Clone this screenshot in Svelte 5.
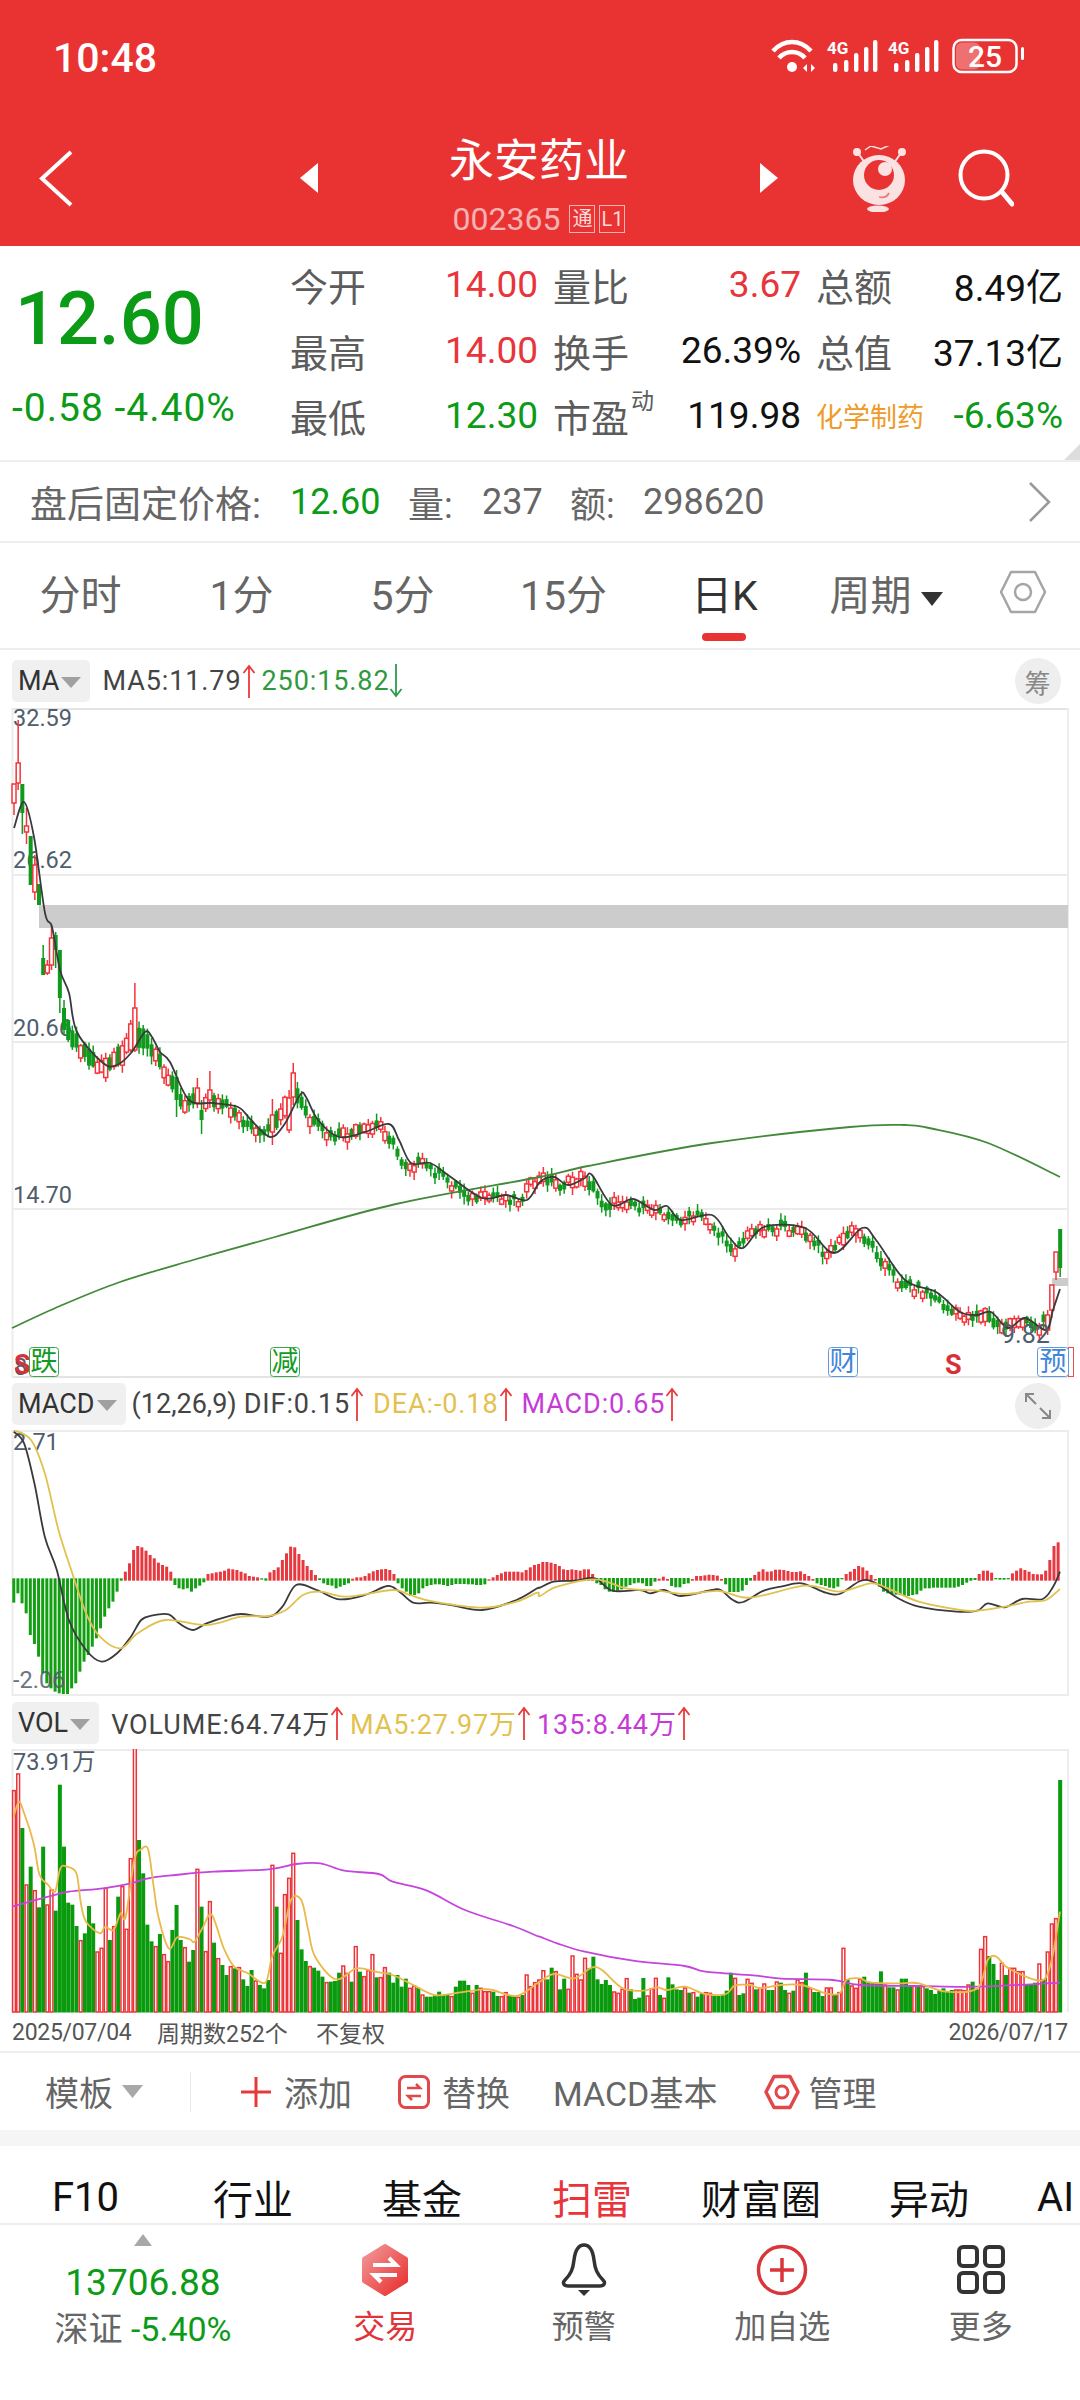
<script lang="ts">
  // vol bar tops as read off the screen, negative = green (down day), baseline 937 in zoom units
  const V = [272,222,-384,555,-500,572,-622,-440,615,570,-632,-254,-440,-608,-614,-678,722,-700,-618,-670,756,745,565,-720,680,-590,560,688,476,145,-420,-520,-674,-724,740,-702,764,785,-690,-615,-720,743,-785,-750,508,-620,755,605,-728,776,-795,-825,800,-805,803,-838,-858,-810,843,-855,-865,-840,496,-620,760,584,535,460,-660,-748,-783,800,-803,-812,-830,848,-845,-843,-818,798,820,-845,740,-815,830,812,764,-832,833,803,-818,-848,-825,-860,-836,865,858,-863,885,-890,-890,-885,-875,-885,-885,890,-860,-842,-842,-855,880,-855,865,875,875,-875,-888,890,878,-888,-888,892,-885,825,860,848,840,
    812,-838,-803,815,-868,-836,868,768,823,840,775,-805,-770,-838,-852,-840,-855,876,880,868,836,-868,-897,-893,-834,888,866,835,-885,895,-832,-853,-868,-870,864,-878,878,-890,-880,878,880,-888,-888,-886,-872,-818,835,-885,-880,838,850,-868,865,852,-870,-870,846,-848,-870,880,-872,840,848,-818,866,-876,-876,-888,864,864,-882,878,745,-838,858,865,838,-830,-845,-848,-848,-814,855,-862,-862,870,-836,-836,-855,858,-855,860,-865,-870,-882,-872,-865,-875,-870,870,870,872,855,-845,-868,748,710,-768,-792,-840,790,-825,805,805,815,815,-855,-855,-848,792,-838,756,672,656,-240];

  const barX = (i: number) => 14 + 4.168 * i;
  const rnd = (i: number) => { const s = Math.sin(i * 12.9898) * 43758.5453; return s - Math.floor(s); };

  const xl = (z: number) => z / 2.904;
  const xr = (z: number) => 540 + z / 2.904;
  const pts = (left: number[][], right: number[][], y0l: number, y0r: number) => [
    ...left.map(([x, y]) => [xl(x), y0l + y / 3]),
    ...right.map(([x, y]) => [xr(x), y0r + y / 3])
  ];

  // catmull-rom through the read points
  function smooth(p: number[][]) {
    let d = `M${p[0][0].toFixed(1)} ${p[0][1].toFixed(1)}`;
    for (let i = 0; i < p.length - 1; i++) {
      const a = p[i - 1] || p[i], b = p[i], c = p[i + 1], e = p[i + 2] || c;
      const c1 = [b[0] + (c[0] - a[0]) / 6, b[1] + (c[1] - a[1]) / 6];
      const c2 = [c[0] - (e[0] - b[0]) / 6, c[1] - (e[1] - b[1]) / 6];
      d += `C${c1[0].toFixed(1)} ${c1[1].toFixed(1)} ${c2[0].toFixed(1)} ${c2[1].toFixed(1)} ${c[0].toFixed(1)} ${c[1].toFixed(1)}`;
    }
    return d;
  }

  const ma5Pts = [[14,828],[24,802],[34,837],[45,913],[52,927],[60,970],[69,993],[77,1032],[103,1063],[117,1065],[131,1053],[145,1032],[152,1037],[160,1052],[170,1062],[189,1100],[213,1103],[238,1107],[251,1120],[270,1137],[284,1125],[300,1095],[306,1097],[318,1120],[339,1137],[365,1132],[389,1124],[399,1140],[411,1163],[430,1163],[448,1175],[482,1198],[506,1195],[527,1200],[540,1182],[554,1177],[568,1185],[585,1178],[592,1175],[612,1205],[633,1199],[654,1210],[667,1206],[681,1220],[712,1215],[729,1237],[743,1248],[764,1227],[805,1228],[834,1253],[862,1228],[876,1240],[905,1280],[936,1292],[960,1312],[977,1315],[991,1312],[1008,1328],[1025,1318],[1046,1330],[1053,1310],[1060,1289]];
  const ma250Pts = [[12,1328],[60,1306],[120,1282],[193,1260],[275,1237],[396,1204],[540,1177],[588,1166],[712,1143],[850,1127],[905,1125],[929,1128],[988,1143],[1060,1177]];

  const yAt = (x: number) => {
    for (let i = 0; i < ma5Pts.length - 1; i++) {
      const [ax, ay] = ma5Pts[i], [bx, by] = ma5Pts[i + 1];
      if (x <= bx) return ay + ((by - ay) * Math.max(0, x - ax)) / (bx - ax);
    }
    return 1289;
  };

  // hand read candles: [body top, body bottom, wick top, wick bottom]
  const fixed: Record<number, number[]> = {
    0:[784,803,784,815],1:[763,783,720,790],2:[784,813,784,834],3:[826,832,808,844],4:[836,885,836,885],5:[865,892,855,900],6:[884,905,884,905],
    7:[958,975,945,975],8:[965,973,960,975],9:[938,965,925,970],10:[935,950,932,968],11:[950,998,950,1013],12:[1008,1030,1000,1035],13:[1020,1040,1020,1042],
    28:[1024,1050,1020,1052],29:[1008,1050,983,1052],39:[1077,1100,1070,1117],44:[1088,1103,1078,1108],45:[1110,1120,1100,1134],47:[1090,1100,1071,1108],
    62:[1115,1132,1099,1145],66:[1098,1130,1090,1133],67:[1073,1097,1063,1105],
    248:[1315,1330,1310,1335],249:[1285,1310,1285,1318],250:[1252,1272,1252,1280],251:[1229,1268,1229,1277]
  };

  const candles = V.map((v, i) => {
    const up = v > 0;
    const h = (937 - Math.abs(v)) / 3;
    const x = barX(i);
    if (fixed[i]) {
      const [t, b, wt, wb] = fixed[i];
      return { x, up, t, b, wt, wb };
    }
    const c = yAt(x + 8) + (rnd(i) - 0.5) * 9 + (up ? 2 : 0);
    const bh = 3 + Math.min(h * 0.13, 17);
    const t = c - bh / 2, b = c + bh / 2;
    return { x, up, t, b, wt: t - 1 - rnd(i + 300) * 6, wb: b + 1 + rnd(i + 600) * 7 };
  });

  // macd histogram, zoom units; under the split value it is a red bar
  const hL = [788,760,790,820,885,912,950,1000,1030,1045,1055,1060,1062,1062,1045,1030,995,965,945,920,895,865,830,805,785,755,722,695,670,630,618,622,632,645,655,668,675,680,695,735,745,748,745,755,745,737,727,702,700,697,695,692,686,688,690,695,700,708,710,712,719,722,697,690,682,660,640,620,622,642,660,678,690,705,720,730,735,737,745,740,735,730,716,712,712,708,700,694,690,688,687,690,702,730,745,755,768,765,760,745,738,735,733,733,735,738,735,732,732,732,733,733,735,735,733,718,712,705,700,695,695,695,695,697,690,682,675,672];
  const hR = [426,426,428,432,438,448,450,448,450,452,448,448,462,490,495,508,515,515,512,508,500,495,490,488,490,498,498,485,476,470,477,498,502,502,492,490,477,468,468,466,464,465,467,477,493,516,516,516,512,495,482,465,455,448,455,454,449,449,450,453,456,456,454,462,468,477,490,495,498,503,505,500,478,462,455,447,438,442,452,465,477,500,515,520,522,524,525,527,528,525,523,512,505,505,503,503,503,503,503,503,500,495,488,482,480,462,452,452,458,478,479,479,478,460,452,445,450,455,462,463,463,452,420,378,367];
  const hist = [
    ...hL.map((z, i) => ({ x: xl(40 + 12 * i), z, zero: 715, redZero: 722, split: 719 })),
    ...hR.map((z, i) => ({ x: xr(8 + 12.07 * i), z, zero: 474, redZero: 482, split: 478 }))
  ].map((b) => {
    const red = b.z < b.split;
    const y0 = b.zero === 715 ? 1340 : 1420;
    return red
      ? { x: b.x, red, y: y0 + b.z / 3, h: (b.redZero - b.z) / 3 }
      : { x: b.x, red, y: y0 + b.zero / 3, h: Math.max(1, (b.z - b.zero) / 3) };
  });

  const difPath = smooth(pts(
    [[40,275],[70,310],[100,430],[130,590],[165,690],[200,840],[250,930],[295,965],[340,940],[380,890],[410,840],[440,827],[490,823],[520,850],[560,870],[600,850],[660,830],[700,822],[780,830],[820,800],[860,735],[920,750],[985,778],[1060,765],[1125,738],[1160,755],[1200,788],[1250,788],[1310,795],[1400,810],[1500,780],[1560,745]],
    [[0,503],[40,485],[100,482],[160,475],[210,512],[290,510],[320,520],[360,510],[410,528],[500,510],[525,510],[560,540],[590,546],[650,512],[700,500],[760,490],[830,518],[870,522],[930,483],[970,487],[1040,535],[1100,560],[1210,575],[1270,572],[1300,550],[1350,562],[1400,537],[1460,537],[1490,500],[1510,455]],
    1340, 1420));
  const deaPath = smooth(pts(
    [[40,270],[90,300],[130,400],[170,570],[210,700],[250,820],[290,890],[350,925],[400,880],[480,840],[600,855],[700,830],[780,828],[830,810],[880,765],[930,755],[1010,770],[1140,750],[1190,765],[1260,785],[1400,803],[1500,785],[1560,758]],
    [[0,528],[50,500],[160,478],[250,505],[340,512],[420,522],[520,513],[610,533],[770,497],[870,515],[960,490],[1010,505],[1100,545],[1220,570],[1270,572],[1350,560],[1420,545],[1470,540],[1510,507]],
    1340, 1420));

  const volMa5 = smooth(pts(
    [[40,350],[55,305],[70,340],[85,385],[100,440],[115,525],[140,555],[160,575],[175,505],[195,500],[222,520],[235,610],[250,665],[290,700],[305,680],[330,690],[350,640],[365,650],[390,480],[410,448],[430,448],[445,550],[460,650],[490,745],[515,712],[550,717],[565,725],[590,680],[615,645],[650,745],[680,800],[720,820],[770,848],[790,770],[820,710],[845,600],[875,600],[895,690],[915,770],[975,838],[1035,805],[1090,815],[1140,825],[1200,855],[1260,885],[1320,880],[1400,868],[1430,870],[1500,888],[1560,850]],
    [[0,845],[40,822],[100,835],[150,803],[180,810],[240,865],[300,872],[340,862],[370,870],[420,860],[480,882],[540,882],[565,857],[610,855],[640,865],[700,855],[760,855],[830,880],[870,880],[890,840],[930,835],[960,848],[1050,850],[1100,850],[1180,875],[1270,865],[1300,780],[1325,770],[1360,805],[1440,840],[1470,830],[1490,760],[1510,635]],
    1700, 1700));
  const volMa135 = smooth(pts(
    [[35,620],[140,590],[200,575],[300,565],[380,550],[430,535],[510,525],[620,515],[780,508],[860,492],[930,490],[1000,512],[1100,522],[1140,545],[1240,572],[1350,630],[1490,678],[1560,708]],
    [[0,710],[50,730],[130,755],[270,782],[420,798],[480,815],[620,826],[700,836],[850,840],[930,855],[1100,858],[1270,860],[1510,848]],
    1700, 1700));

  const bigTabs = ['分时', '1分', '5分', '15分', '日K'];
  const subTabs = ['F10', '行业', '基金', '扫雷', '财富圈', '异动', 'AI'];
</script>

{#snippet arrow(color: string, down = false)}
  <svg class="arr" width="14" height="36" viewBox="0 0 14 36">
    <path d={down ? 'M7 1V33M1.5 26L7 33L12.5 26' : 'M7 35V3M1.5 10L7 3L12.5 10'} fill="none" stroke={color} stroke-width="1.8" />
  </svg>
{/snippet}

{#snippet tri()}
  <svg class="tri" width="20" height="12" viewBox="0 0 20 12"><path d="M0 1H20L10 12Z" fill="#a0a0a0" /></svg>
{/snippet}

<div class="page">
  <header class="top">
    <div class="status">
      <span class="time">10:48</span>
      <svg class="sicons" width="260" height="40" viewBox="768 36 260 40">
        <g fill="none" stroke="#fff" stroke-width="4.5">
          <path d="M773 51C784 39 800 39 811 51" />
          <path d="M779 58C786 50 798 50 805 58" />
        </g>
        <circle cx="792" cy="67" r="5" fill="#fff" />
        <path d="M803 68l4-4v8zM815 68l-4-4v8z" fill="#fff" />
        {#each [0, 61] as dx}
          <text x={827 + dx} y="54" class="g4">4G</text>
          {#each [[835,63],[846,60],[856,53],[866,47],[875,40]] as b}
            <rect x={b[0] + dx - 2} y={b[1]} width="4.4" height={72 - b[1]} rx="2" fill="#fff" />
          {/each}
        {/each}
        <rect x="953.5" y="40" width="63" height="32" rx="8" fill="none" stroke="#fff" stroke-width="2.5" />
        <rect x="956" y="42.5" width="24" height="27" rx="6" fill="#fff" opacity=".3" />
        <text x="985" y="67" class="batt">25</text>
        <rect x="1021" y="47" width="3" height="13" rx="1.5" fill="#fff" />
      </svg>
    </div>
    <div class="nav">
      <svg class="back" width="40" height="60" viewBox="0 0 40 60"><path d="M33 3L4 29.500L33 56" fill="none" stroke="#fff" stroke-width="4" /></svg>
      <svg class="stepL" width="18" height="30" viewBox="0 0 18 30"><path d="M18 0V30L0 15Z" fill="#fff" /></svg>
      <div class="title">
        <div class="name">永安药业</div>
        <div class="code">002365<span class="tag">通</span><span class="tag">L1</span></div>
      </div>
      <svg class="stepR" width="18" height="30" viewBox="0 0 18 30"><path d="M0 0V30L18 15Z" fill="#fff" /></svg>
      <svg class="bot" width="60" height="66" viewBox="850 146 60 66">
        <path d="M865 150l6-4 10 3 11-5" fill="none" stroke="#fbe3e3" stroke-width="1.5" />
        <path d="M858 153l7 10M901 153l-7 10" stroke="#fbe3e3" stroke-width="2" />
        <circle cx="857" cy="152" r="4" fill="#fbe3e3" /><circle cx="902" cy="152" r="4" fill="#fbe3e3" />
        <ellipse cx="879" cy="180" rx="26" ry="25" fill="#fae2e2" />
        <circle cx="879" cy="175" r="15" fill="#e93333" />
        <circle cx="885" cy="169" r="7" fill="#fbe3e3" />
        <path d="M879 197c4 1 8 0 10-4" fill="none" stroke="#e97a7a" stroke-width="1.8" />
        <ellipse cx="878" cy="209" rx="11" ry="3.500" fill="#fae2e2" />
      </svg>
      <svg class="search" width="60" height="60" viewBox="954 148 60 60">
        <circle cx="984" cy="175" r="23.500" fill="none" stroke="#fff" stroke-width="4" />
        <path d="M1002 192L1012 204" stroke="#fff" stroke-width="5" stroke-linecap="round" />
      </svg>
    </div>
  </header>

  <section class="quote">
    <div class="price">
      <div class="last">12.60</div>
      <div class="chg">-0.58 -4.40%</div>
    </div>
    <div class="stats">
      <span class="l">今开</span><span class="v red">14.00</span>
      <span class="l">量比</span><span class="v red">3.67</span>
      <span class="l">总额</span><span class="v last-col">8.49亿</span>
      <span class="l">最高</span><span class="v red">14.00</span>
      <span class="l">换手</span><span class="v">26.39%</span>
      <span class="l">总值</span><span class="v last-col">37.13亿</span>
      <span class="l">最低</span><span class="v green">12.30</span>
      <span class="l sup">市盈<i>动</i></span><span class="v">119.98</span>
      <span class="l ind">化学制药</span><span class="v last-col green">-6.63%</span>
    </div>
    <div class="corner"></div>
  </section>

  <section class="after">
    <span class="a1">盘后固定价格:</span>
    <span class="a2">12.60</span>
    <span class="a3">量:</span>
    <span class="a4">237</span>
    <span class="a5">额:</span>
    <span class="a6">298620</span>
    <svg class="chev" width="24" height="40" viewBox="0 0 24 40"><path d="M2 1L21 20L2 39" fill="none" stroke="#999" stroke-width="2.500" /></svg>
  </section>

  <nav class="periods">
    {#each bigTabs as t}
      <div class="ptab" class:on={t === '日K'}>{t}</div>
    {/each}
    <div class="ptab wide">周期<svg class="ptri" width="22" height="14" viewBox="0 0 22 14"><path d="M0 0H22L11 14Z" fill="#333" /></svg></div>
    <div class="hexcell">
      <svg width="48" height="44" viewBox="0 0 48 44">
        <path d="M12 2H36L46 22L36 42H12L2 22Z" fill="none" stroke="#a5a5a5" stroke-width="2.500" stroke-linejoin="round" />
        <circle cx="24" cy="22" r="8" fill="none" stroke="#a5a5a5" stroke-width="2.500" />
      </svg>
    </div>
  </nav>

  <div class="head h-ma">
    <div class="sel">MA{@render tri()}</div>
    <span class="ink ma5">MA5:11.79</span>{@render arrow('#ea3a3a')}
    <span class="grn">250:15.82</span>{@render arrow('#2e9a4c', true)}
    <div class="round chou">筹</div>
  </div>
  <svg class="chart" width="1080" height="670" viewBox="0 708 1080 670">
    {#each [709, 875, 1042, 1209, 1377] as y}
      <path d="M12 {y}H1068" stroke="#e4e4e4" stroke-width={y === 709 || y === 1377 ? 2 : 1.500} />
    {/each}
    <path d="M12.500 708V1378M1068 708V1378" stroke="#ececec" stroke-width="2" />
    <rect x="39" y="905" width="1029" height="23" fill="#cccccc" />
    <rect x="1052" y="1278" width="16" height="8" fill="#cccccc" />

    <text x="13" y="726" class="ax">32.59</text>
    <text x="13" y="868" class="ax">26.62</text>
    <text x="13" y="1036" class="ax">20.66</text>
    <text x="13" y="1203" class="ax">14.70</text>

    {#each candles as c}
      {#if c.up}
        <path d="M{c.x} {c.wt}V{c.t}M{c.x} {c.b}V{c.wb}" stroke="#f4333a" stroke-width="1.500" />
        <rect x={c.x - 2} y={c.t} width="4" height={c.b - c.t} fill="#fff" stroke="#f4333a" stroke-width="1.500" />
      {:else}
        <path d="M{c.x} {c.wt}V{c.wb}" stroke="#0f9a1e" stroke-width="1.500" />
        <rect x={c.x - 2} y={c.t} width="4" height={c.b - c.t} fill="#0f9a1e" />
      {/if}
    {/each}

    <path d={smooth(ma250Pts)} fill="none" stroke="#43893a" stroke-width="1.800" />
    <path d={smooth(ma5Pts)} fill="none" stroke="#3a3a3e" stroke-width="1.800" />
    <text x="1001" y="1343" class="ax big">9.82</text>

    <text x="14" y="1375" class="ax">8</text>
    <text x="14" y="1374" class="sig">S</text>
    <rect x="29.500" y="1347.500" width="29" height="29" rx="3" class="bx bx-g" />
    <text x="44" y="1371" class="bt" fill="#129a24">跌</text>
    <rect x="270.500" y="1347.500" width="29" height="29" rx="3" class="bx bx-g" />
    <text x="285" y="1371" class="bt" fill="#129a24">减</text>
    <rect x="828.500" y="1347.500" width="29" height="29" rx="3" class="bx bx-b" />
    <text x="843" y="1371" class="bt" fill="#3f86d8">财</text>
    <text x="945" y="1374" class="sig">S</text>
    <rect x="1068.500" y="1347.500" width="5" height="29" class="bx bx-r" />
    <rect x="1037.500" y="1347.500" width="31" height="29" rx="3" class="bx bx-b" />
    <text x="1053" y="1371" class="bt" fill="#3f86d8">预</text>
  </svg>

  <div class="head h-macd">
    <div class="sel">MACD{@render tri()}</div>
    <span class="ink par">(12,26,9)</span>
    <span class="ink">DIF:0.15</span>{@render arrow('#ea3a3a')}
    <span class="yel">DEA:-0.18</span>{@render arrow('#ea3a3a')}
    <span class="mag">MACD:0.65</span>{@render arrow('#ea3a3a')}
    <div class="round fit">
      <svg width="28" height="28" viewBox="0 0 28 28">
        <path d="M2 10V2H10M2 2L12 12M26 18V26H18M26 26L16 16" fill="none" stroke="#888" stroke-width="2" />
      </svg>
    </div>
  </div>
  <svg class="chart" width="1080" height="266" viewBox="0 1430 1080 266">
    <path d="M12 1431H1068M12 1695H1068M12.500 1430V1696M1068 1430V1696" stroke="#ececec" stroke-width="2" fill="none" />
    <text x="13" y="1450" class="ax">2.71</text>
    {#each hist as b}
      <rect x={b.x - 1.500} y={b.y} width="3" height={b.h} fill={b.red ? '#e8383f' : '#12a012'} />
    {/each}
    <text x="13" y="1688" class="ax axo">-2.06</text>
    <path d={difPath} fill="none" stroke="#3a3a3e" stroke-width="1.800" />
    <path d={deaPath} fill="none" stroke="#e0c24e" stroke-width="1.800" />
  </svg>

  <div class="head h-vol">
    <div class="sel">VOL{@render tri()}</div>
    <span class="ink vol">VOLUME:64.74万</span>{@render arrow('#ea3a3a')}
    <span class="yel">MA5:27.97万</span>{@render arrow('#ea3a3a')}
    <span class="mag">135:8.44万</span>{@render arrow('#ea3a3a')}
  </div>
  <svg class="chart" width="1080" height="264" viewBox="0 1749 1080 264">
    <path d="M12 1750H1068M12.500 1749V2012M1068 1749V2012" stroke="#ececec" stroke-width="2" fill="none" />
    {#each V as v, i}
      {@const top = 1700 + Math.abs(v) / 3}
      {#if v > 0}
        <rect x={barX(i) - 1.400} y={top} width="2.800" height={2012 - top} fill="#fff" stroke="#ee3338" stroke-width="1.500" />
      {:else}
        <rect x={barX(i) - 2} y={top} width="4" height={2012.500 - top} fill="#0a9a0e" />
      {/if}
    {/each}
    <text x="13" y="1770" class="ax">73.91万</text>
    <path d={volMa135} fill="none" stroke="#c545dc" stroke-width="1.800" />
    <path d={volMa5} fill="none" stroke="#eab94a" stroke-width="1.800" />
  </svg>

  <div class="dates">
    <span class="d1">2025/07/04</span>
    <span class="d2">周期数252个</span>
    <span class="d3">不复权</span>
    <span class="d4">2026/07/17</span>
  </div>

  <div class="tools">
    <span class="tpl">模板</span>
    <svg class="ttri" width="21" height="13" viewBox="0 0 21 13"><path d="M0 0H21L10.500 13Z" fill="#a8a8a8" /></svg>
    <i class="vline"></i>
    <svg class="plus" width="30" height="30" viewBox="0 0 30 30"><path d="M15 0V30M0 15H30" stroke="#e63a3a" stroke-width="3" /></svg>
    <span class="t-add">添加</span>
    <svg class="swap" width="32" height="34" viewBox="0 0 32 34">
      <rect x="1.500" y="1.500" width="29" height="31" rx="6" fill="none" stroke="#e2474a" stroke-width="3" />
      <path d="M9 13H22L18 9M23 21H10L14 25" fill="none" stroke="#e2474a" stroke-width="2.500" />
    </svg>
    <span class="t-rep">替换</span>
    <span class="t-macd">MACD基本</span>
    <svg class="mhex" width="36" height="36" viewBox="0 0 36 36">
      <path d="M10 2.500H26L34 18L26 33.500H10L2 18Z" fill="none" stroke="#e2474a" stroke-width="3.500" stroke-linejoin="round" />
      <circle cx="18" cy="18" r="6" fill="none" stroke="#e2474a" stroke-width="3" />
    </svg>
    <span class="t-man">管理</span>
  </div>
  <div class="band"></div>

  <nav class="subtabs">
    {#each subTabs as t}
      <span class="st st-{subTabs.indexOf(t)}" class:hot={t === '扫雷'}>{t}</span>
    {/each}
  </nav>

  <footer class="bar">
    <div class="idx">
      <svg width="18" height="12" viewBox="0 0 18 12"><path d="M9 0L18 12H0Z" fill="#a8a8a8" /></svg>
      <div class="idxv">13706.88</div>
      <div class="idxn">深证 <b>-5.40%</b></div>
    </div>
    <div class="item trade">
      <svg width="48" height="54" viewBox="0 0 48 54">
        <defs><linearGradient id="tg" x1="0" y1="0" x2="1" y2="1"><stop offset="0" stop-color="#f29a9a" /><stop offset="1" stop-color="#e82c2c" /></linearGradient></defs>
        <path d="M24 3L45 16V38L24 51L3 38V16Z" fill="url(#tg)" stroke="url(#tg)" stroke-width="4" stroke-linejoin="round" />
        <path d="M12 22H35L28 15M36 32H13L20 39" fill="none" stroke="#fff" stroke-width="4" />
      </svg>
      <span>交易</span>
    </div>
    <div class="item">
      <svg width="46" height="54" viewBox="0 0 46 54">
        <path d="M23 2C17 2 14 9 13 17C12 26 10 31 4 37C1 40 3 43 7 43H39C43 43 45 40 42 37C36 31 34 26 33 17C32 9 29 2 23 2Z" fill="none" stroke="#333" stroke-width="3.500" />
        <path d="M17 47H29L23 53Z" fill="#333" />
      </svg>
      <span>预警</span>
    </div>
    <div class="item">
      <svg width="52" height="54" viewBox="0 0 52 54">
        <circle cx="26" cy="27" r="23.500" fill="none" stroke="#d8363a" stroke-width="3.500" />
        <path d="M26 15V39M14 27H38" stroke="#d8363a" stroke-width="3.500" />
      </svg>
      <span>加自选</span>
    </div>
    <div class="item">
      <svg width="50" height="54" viewBox="0 0 50 54">
        <g fill="none" stroke="#333" stroke-width="4">
          <rect x="3" y="4" width="18" height="19" rx="4" /><rect x="29" y="4" width="18" height="19" rx="4" />
          <rect x="3" y="30" width="18" height="19" rx="4" /><rect x="29" y="30" width="18" height="19" rx="4" />
        </g>
      </svg>
      <span>更多</span>
    </div>
  </footer>
</div>

<style>
  :global(body) {
    margin: 0;
    background: #fff;
  }

  .page {
    width: 1080px;
    height: 2400px;
    overflow: hidden;
    font-family: Roboto, "Noto Sans CJK SC", sans-serif;
    color: #333;
  }

  .top {
    height: 246px;
    background: #e93333;
    color: #fff;
  }

  .status {
    display: flex;
    justify-content: space-between;
    align-items: center;
    height: 116px;
    padding: 0 52px 0 53px;
  }

  .time {
    font-size: 41px;
    font-weight: 500;
  }

  .sicons {
    display: block;
    margin-top: -4px;
  }

  .g4 {
    font-size: 17px;
    font-weight: 700;
    fill: #fff;
  }

  .batt {
    font-size: 30px;
    font-weight: 500;
    fill: #fff;
    text-anchor: middle;
  }

  .nav {
    display: flex;
    align-items: flex-start;
    height: 130px;
  }

  .back {
    margin: 33px 0 0 38px;
  }

  .stepL {
    margin: 47px 0 0 222px;
  }

  .stepR {
    margin-top: 47px;
  }

  .title {
    width: 442px;
    text-align: center;
  }

  .name {
    font-size: 45px;
    line-height: 60px;
    margin-top: 16px;
  }

  .code {
    display: flex;
    justify-content: center;
    align-items: center;
    gap: 4px;
    font-size: 32px;
    line-height: 36px;
    margin-top: 9px;
    color: #f5b3b3;
  }

  .tag {
    width: 24px;
    height: 26px;
    border: 1px solid #f5b3b3;
    font-size: 20px;
    line-height: 26px;
    text-align: center;
    color: #fbdada;
  }

  .tag:first-of-type {
    margin-left: 5px;
  }

  .bot {
    margin: 30px 0 0 72px;
  }

  .search {
    margin: 32px 0 0 44px;
  }

  .quote {
    position: relative;
    display: flex;
    height: 216px;
    border-bottom: 2px solid #eeeeee;
    box-sizing: border-box;
  }

  .price {
    width: 290px;
    flex: none;
  }

  .last {
    font-size: 74px;
    line-height: 90px;
    margin: 28px 0 0 15px;
    color: #0b9b17;
    font-weight: 500;
  }

  .chg {
    font-size: 39px;
    letter-spacing: 1px;
    line-height: 44px;
    margin: 22px 0 0 12px;
    color: #0b9b17;
    white-space: nowrap;
  }

  .stats {
    display: grid;
    grid-template-columns: 75px 188px 75px 188px 76px 171px;
    grid-auto-rows: 65.5px;
    align-items: center;
    margin-top: 6px;
    height: 200px;
    font-size: 37px;
  }

  .l {
    font-size: 38px;
    color: #5c5c5c;
    white-space: nowrap;
  }

  .v {
    padding-right: 15px;
    text-align: right;
    color: #111;
    white-space: nowrap;
  }

  .last-col {
    padding-right: 0;
  }

  .red { color: #e8343b; }
  .green { color: #0b9b17; }

  .sup {
    position: relative;
  }

  .sup i {
    position: absolute;
    left: 78px;
    top: -6px;
    font-size: 23px;
    font-style: normal;
  }

  .ind {
    font-size: 27px;
    color: #ef9a2a;
  }

  .corner {
    position: absolute;
    right: 0;
    bottom: 0;
    width: 16px;
    height: 16px;
    background: #dddddd;
    clip-path: polygon(100% 0, 100% 100%, 0 100%);
  }

  .after {
    display: flex;
    align-items: center;
    height: 81px;
    border-bottom: 2px solid #eeeeee;
    box-sizing: border-box;
    font-size: 36px;
    color: #666;
    position: relative;
    white-space: nowrap;
  }

  .a1 { margin-left: 30px; width: 260px; font-size: 37px; }
  .a2 { width: 118px; color: #0b9b17; }
  .a3 { width: 74px; }
  .a4 { width: 88px; }
  .a5 { width: 73px; }
  .a6 { width: 385px; }
  .chev { flex: none; }

  .periods {
    display: flex;
    height: 107px;
    box-sizing: border-box;
    padding-top: 27px;
    border-bottom: 2px solid #eeeeee;
    font-size: 41px;
    color: #666;
  }

  .ptab {
    position: relative;
    flex: 0 0 161px;
    height: 52px;
    line-height: 52px;
    text-align: center;
    white-space: nowrap;
  }

  .ptab.wide {
    flex-basis: 162px;
  }

  .ptab.on {
    color: #333;
  }

  .ptab.on::after {
    content: '';
    position: absolute;
    left: 58px;
    top: 63px;
    width: 44px;
    height: 8px;
    border-radius: 4px;
    background: #e93333;
  }

  .ptri {
    margin-left: 9px;
    vertical-align: 4px;
  }

  .hexcell {
    padding: 0 0 0 32px;
  }

  .head {
    position: relative;
    display: flex;
    align-items: center;
    padding-left: 12px;
    font-size: 27px;
    letter-spacing: .9px;
    white-space: nowrap;
    box-sizing: border-box;
  }

  .h-ma { height: 58px; padding-top: 3px; }
  .h-macd { height: 52px; }
  .h-vol { height: 53px; }

  .h-macd .sel {
    margin-right: 6px;
  }

  .h-vol .yel {
    margin-left: 6px;
  }

  .h-vol .mag {
    margin-left: 6px;
  }

  .sel {
    display: flex;
    align-items: center;
    gap: 2px;
    height: 42px;
    padding: 0 9px 0 6px;
    margin-right: 12px;
    border-radius: 5px;
    background: #f0f0f0;
    color: #333;
    font-size: 27px;
    letter-spacing: 0;
  }

  .tri {
    margin-top: 2px;
  }

  .ink { color: #444; }
  .grn { color: #2e9a3c; margin-left: 6px; }
  .yel { color: #e3c14f; margin-left: 9px; }
  .mag { color: #c53bd6; margin-left: 9px; }
  .par { margin-right: 7px; letter-spacing: 0; }
  .arr { flex: none; }

  .round {
    position: absolute;
    right: 19px;
    top: 5px;
    display: flex;
    align-items: center;
    justify-content: center;
    width: 46px;
    height: 46px;
    border-radius: 50%;
    background: #eeeeee;
    color: #888;
    font-size: 26px;
  }

  .chou {
    top: 8px;
  }

  .chart {
    display: block;
  }

  .ax {
    font-size: 23.5px;
    fill: #4f5d6c;
    font-family: Roboto, "Noto Sans CJK SC", sans-serif;
  }

  .big {
    font-size: 25px;
  }

  .axo {
    opacity: .85;
  }

  .sig {
    font-size: 27px;
    font-weight: 700;
    fill: #d8303a;
  }

  .bx {
    fill: #fff;
    stroke-width: 1;
  }

  .bx-g { stroke: #3da64a; }
  .bx-b { stroke: #5f9ae0; }
  .bx-r { stroke: #e85050; }

  .bt {
    font-size: 27px;
    text-anchor: middle;
  }

  .dates {
    position: relative;
    display: flex;
    align-items: center;
    height: 40px;
    border-bottom: 2px solid #eeeeee;
    box-sizing: border-box;
    font-size: 23px;
    color: #555;
    white-space: nowrap;
  }

  .d1 { margin-left: 12px; width: 145px; letter-spacing: -.3px; }
  .d2 { width: 159px; }
  .d3 { flex: 1; }
  .d4 { margin-right: 12px; letter-spacing: -.3px; }

  .tools {
    display: flex;
    align-items: center;
    height: 77px;
    font-size: 34px;
    color: #666;
    white-space: nowrap;
  }

  .tpl { margin-left: 45px; }
  .ttri { margin-left: 9px; }
  .vline { width: 1px; height: 40px; background: #e8e8e8; margin-left: 47px; }
  .plus { margin-left: 50px; }
  .t-add { margin-left: 13px; }
  .swap { margin-left: 46px; }
  .t-rep { margin-left: 12px; }
  .t-macd { margin-left: 43px; }
  .mhex { margin-left: 47px; }
  .t-man { margin-left: 8px; }

  .band {
    height: 16px;
    background: #f5f5f5;
  }

  .subtabs {
    position: relative;
    display: flex;
    align-items: center;
    height: 79px;
    padding-top: 25px;
    box-sizing: border-box;
    border-bottom: 2px solid #eeeeee;
    font-size: 40px;
    color: #111;
    white-space: nowrap;
    overflow: hidden;
  }

  .st { flex: none; }
  .st-0 { margin-left: 52px; }
  .st-1 { margin-left: 94px; }
  .st-2 { margin-left: 89px; }
  .st-3 { margin-left: 90px; }
  .st-4 { margin-left: 69px; }
  .st-5 { margin-left: 68px; }
  .st-6 { margin-left: 68px; }
  .hot { color: #e8343b; }

  .bar {
    display: flex;
    height: 175px;
  }

  .idx {
    flex: 0 0 286px;
    text-align: center;
    padding-top: 9px;
    box-sizing: border-box;
    white-space: nowrap;
  }

  .idx svg {
    display: block;
    margin: 0 auto;
  }

  .idxv {
    font-size: 37px;
    line-height: 40px;
    margin-top: 17px;
    color: #0b9b17;
  }

  .idxn {
    font-size: 34px;
    line-height: 44px;
    margin-top: 4px;
    color: #666;
  }

  .idxn b {
    font-weight: 400;
    color: #0b9b17;
  }

  .item {
    flex: 0 0 198.500px;
    padding-top: 18px;
    box-sizing: border-box;
    text-align: center;
    font-size: 32px;
    color: #666;
  }

  .item svg {
    display: block;
    margin: 0 auto 4px;
  }

  .trade {
    color: #e0343a;
  }
</style>
